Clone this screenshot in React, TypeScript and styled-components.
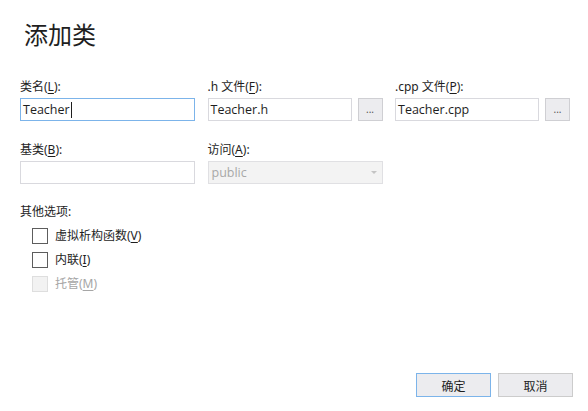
import React from 'react';
import styled, { createGlobalStyle } from 'styled-components';

const GlobalStyle = createGlobalStyle`
  html, body {
    margin: 0;
    padding: 0;
    background: #ffffff;
  }
  body {
    font-family: "Noto Sans", "Noto Sans CJK SC", sans-serif;
    color: #1e1e1e;
  }
`;

const Dialog = styled.div`
  width: 588px;
  height: 411px;
  box-sizing: border-box;
  padding: 0 15px 14px 20px;
  display: flex;
  flex-direction: column;
  background: #fff;
`;

const Title = styled.h1`
  margin: 18px 0 0 4px;
  font-size: 24px;
  font-weight: 400;
  line-height: 32px;
  color: #1e1e1e;
  font-family: "Noto Sans CJK SC", sans-serif;
`;

const FieldGrid = styled.div`
  margin-top: 28px;
  display: grid;
  grid-template-columns: 175px 175px 175px;
  column-gap: 12.5px;
  row-gap: 20px;
`;

const Field = styled.div`
  display: flex;
  flex-direction: column;
  gap: 3px;
`;

const Label = styled.label`
  font-size: 12px;
  line-height: 17px;
  color: #1e1e1e;
  font-family: "Noto Sans", "Noto Sans CJK SC", sans-serif;
  u {
    text-decoration: underline;
    text-underline-offset: 2px;
  }
`;

const InputRow = styled.div`
  display: flex;
  gap: 6px;
`;

const TextBox = styled.div<{ $focused?: boolean }>`
  flex: 1;
  height: 23px;
  box-sizing: border-box;
  border: 1px solid ${p => (p.$focused ? '#7cb4ea' : '#d9d9de')};
  background: #fff;
  padding: 0 2px;
  display: flex;
  align-items: center;
  font-size: 12.5px;
  color: #1e1e1e;
  font-family: "Open Sans", "Noto Sans", sans-serif;
`;

const Caret = styled.span`
  display: inline-block;
  width: 1px;
  height: 16px;
  background: #1e1e1e;
  margin-left: 1px;
`;

const BrowseButton = styled.button`
  width: 25px;
  height: 23px;
  box-sizing: border-box;
  border: 1px solid #cfcfd3;
  background: #ececef;
  padding: 0 0 6px;
  font-size: 10px;
  line-height: 1;
  color: #555;
  font-family: "Noto Sans", sans-serif;
  display: flex;
  align-items: flex-end;
  justify-content: center;
`;

const Select = styled.div`
  height: 23px;
  box-sizing: border-box;
  border: 1px solid #e0e0e3;
  background: #f3f3f3;
  padding: 0 3px;
  display: flex;
  align-items: center;
  justify-content: space-between;
  font-size: 12.5px;
  color: #a8a8a8;
  font-family: "Open Sans", "Noto Sans", sans-serif;
`;

const Arrow = styled.span`
  width: 0;
  height: 0;
  border-left: 3px solid transparent;
  border-right: 3px solid transparent;
  border-top: 3px solid #c4c4c4;
  margin-right: 2px;
`;

const Options = styled.div`
  margin-top: 19px;
  display: flex;
  flex-direction: column;
`;

const OptionList = styled.div`
  margin-top: 8px;
  padding-left: 12px;
  display: flex;
  flex-direction: column;
  gap: 8px;
`;

const CheckRow = styled.div<{ $disabled?: boolean }>`
  display: flex;
  align-items: center;
  gap: 7px;
  font-size: 12px;
  line-height: 16px;
  color: ${p => (p.$disabled ? '#a6a6a6' : '#1e1e1e')};
  font-family: "Noto Sans", "Noto Sans CJK SC", sans-serif;
  u {
    text-decoration: underline;
    text-underline-offset: 2px;
  }
`;

const Box = styled.span<{ $disabled?: boolean }>`
  width: 16px;
  height: 16px;
  box-sizing: border-box;
  border: 1px solid ${p => (p.$disabled ? '#dedede' : '#5d5d5d')};
  background: ${p => (p.$disabled ? '#f2f2f2' : '#fff')};
`;

const Footer = styled.div`
  margin-top: auto;
  display: flex;
  justify-content: flex-end;
  gap: 7px;
`;

const DialogButton = styled.button<{ $primary?: boolean }>`
  width: 75px;
  height: 24px;
  box-sizing: border-box;
  border: 1px solid ${p => (p.$primary ? '#7cb4ea' : '#cccccc')};
  background: #ececef;
  font-size: 12px;
  color: #1e1e1e;
  font-family: "Noto Sans CJK SC", sans-serif;
  padding: 0;
`;

export default function App() {
  return (
    <>
      <GlobalStyle />
      <Dialog>
        <Title>添加类</Title>
        <FieldGrid>
          <Field>
            <Label>类名(<u>L</u>):</Label>
            <TextBox $focused>
              Teacher<Caret />
            </TextBox>
          </Field>
          <Field>
            <Label>.h 文件(<u>F</u>):</Label>
            <InputRow>
              <TextBox>Teacher.h</TextBox>
              <BrowseButton>...</BrowseButton>
            </InputRow>
          </Field>
          <Field>
            <Label>.cpp 文件(<u>P</u>):</Label>
            <InputRow>
              <TextBox>Teacher.cpp</TextBox>
              <BrowseButton>...</BrowseButton>
            </InputRow>
          </Field>
          <Field>
            <Label>基类(<u>B</u>):</Label>
            <TextBox />
          </Field>
          <Field>
            <Label>访问(<u>A</u>):</Label>
            <Select>
              public
              <Arrow />
            </Select>
          </Field>
        </FieldGrid>
        <Options>
          <Label>其他选项:</Label>
          <OptionList>
            <CheckRow>
              <Box />
              <span>虚拟析构函数(<u>V</u>)</span>
            </CheckRow>
            <CheckRow>
              <Box />
              <span>内联(<u>I</u>)</span>
            </CheckRow>
            <CheckRow $disabled>
              <Box $disabled />
              <span>托管(<u>M</u>)</span>
            </CheckRow>
          </OptionList>
        </Options>
        <Footer>
          <DialogButton $primary>确定</DialogButton>
          <DialogButton>取消</DialogButton>
        </Footer>
      </Dialog>
    </>
  );
}
